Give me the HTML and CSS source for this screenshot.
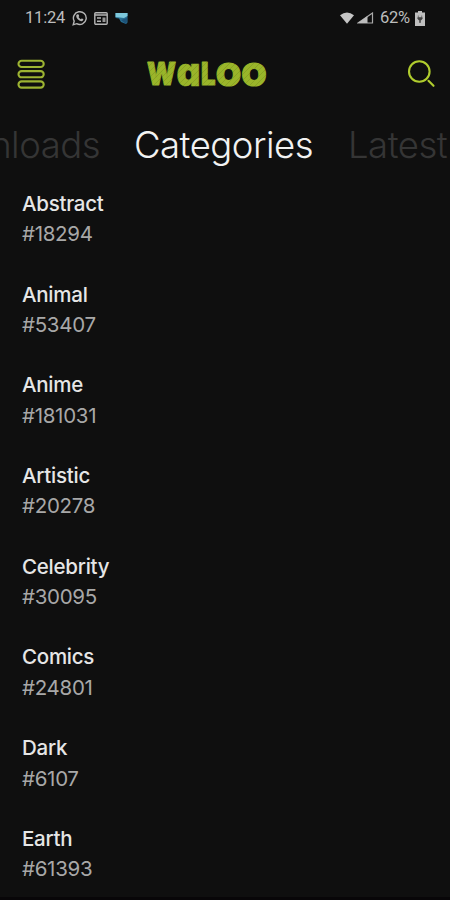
FILE: index.html
```html
<!DOCTYPE html>
<html lang="en">
<head>
<meta charset="utf-8">
<title>Waloo</title>
<link rel="stylesheet" href="styles.css">
</head>
<body>
<div class="screen">
  <div class="status">
    <span class="clock">11:24</span>
    <svg class="whatsapp" width="16" height="16" viewBox="0 0 16 16"><path d="M1.2 14.8l1-3.6a6.4 6.4 0 1 1 2.5 2.5z" fill="none" stroke="#b5b5b5" stroke-width="1.4"/><path d="M5.4 4.3l1.3.2.5 1.7-.7.8c.5 1 1.3 1.7 2.3 2.2l.8-.8 1.7.7c.1 1.5-.8 2.2-2 2.1-2.8-.5-5-2.8-5.1-5.2 0-.8.5-1.5 1.2-1.7z" fill="#b5b5b5"/></svg>
    <svg class="news" width="14" height="13" viewBox="0 0 14 13"><rect x=".8" y=".8" width="12.4" height="11.4" rx="1" fill="none" stroke="#b5b5b5" stroke-width="1.4"/><path d="M1 3h12M3 6h4M3 9.3h4" stroke="#b5b5b5" stroke-width="1.5"/><path d="M8.5 5.5h3v4.5h-3z" fill="#969696"/></svg>
    <svg class="app" width="13" height="13" viewBox="0 0 13 13"><path d="M.5 1h12v9.5L11 12 6 10 4 6.5.5 6z" fill="#286f93"/><path d="M.5 1h12v3L9 6 .5 5z" fill="#7dc8dc"/><path d="M6 8l6-2v3.5L11 12z" fill="#1d5278"/></svg>
    <svg class="wifi" width="14" height="12" viewBox="0 0 14 12"><path d="M0 3.3Q7-2.5 14 3.3L7 11.8z" fill="#c5c5c5"/></svg>
    <svg class="signal" width="17" height="12" viewBox="0 0 17 12"><path d="M1 11L15.5 1v10z" fill="none" stroke="#aaa" stroke-width="1.2"/><path d="M1 11l9.5-7v7z" fill="#bdbdbd"/></svg>
    <span class="percent">62%</span>
    <svg class="battery" width="10" height="15" viewBox="0 0 10 15"><path d="M3 0h4v1.5h3V15H0V1.5h3z" fill="#bfbfbf"/><path d="M3.3 4.5v2M6.7 4.5v2M2.8 6.5h4.4V8L5.5 9.5v2h-1v-2L2.8 8z" fill="#444" stroke="#444" stroke-width=".6"/></svg>
  </div>
  <header class="bar">
    <svg class="menu" width="28" height="30" viewBox="0 0 28 30" fill="none" stroke="#9db432" stroke-width="2.1"><rect x="1.5" y="1.8" width="25.2" height="6.2" rx="3.1"/><rect x="1.5" y="12.1" width="25.2" height="6.2" rx="3.1"/><rect x="1.5" y="22.4" width="25.2" height="6.2" rx="3.1"/></svg>
    <svg class="logo" width="132" height="34" viewBox="0 0 132 34">
      <defs>
        <pattern id="weave" width="6" height="6" patternUnits="userSpaceOnUse"><rect width="6" height="6" fill="#9ab52a"/><path d="M0 6L6 0" stroke="#8aa325" stroke-width="1"/></pattern>
      </defs>
      <g class="letters" fill="url(#weave)" stroke="url(#weave)">
        <text x="7" y="28" textLength="29" lengthAdjust="spacingAndGlyphs">W</text>
        <text class="small-a" x="36.5" y="28.5" textLength="24" lengthAdjust="spacingAndGlyphs">a</text>
        <text x="61" y="28" textLength="14.5" lengthAdjust="spacingAndGlyphs">L</text>
        <text class="round" x="76" y="28.5" textLength="25" lengthAdjust="spacingAndGlyphs">O</text>
        <text class="round" x="101.5" y="28.5" textLength="25" lengthAdjust="spacingAndGlyphs">O</text>
      </g>
    </svg>
    <svg class="search" width="28" height="28" viewBox="0 0 28 28" fill="none" stroke="#b0cc2e" stroke-width="2.1" stroke-linecap="round"><circle cx="12.3" cy="11.5" r="10.3"/><path d="M21.5 20.8l5 5"/></svg>
  </header>
  <nav class="tabs">
    <div class="tab before"><span>Downloads</span></div>
    <div class="tab active">Categories</div>
    <div class="tab after">Latest</div>
  </nav>
  <main class="list">
    <section class="item"><div class="name">Abstract</div><div class="count">#18294</div></section>
    <section class="item"><div class="name">Animal</div><div class="count">#53407</div></section>
    <section class="item"><div class="name">Anime</div><div class="count">#181031</div></section>
    <section class="item"><div class="name">Artistic</div><div class="count">#20278</div></section>
    <section class="item"><div class="name">Celebrity</div><div class="count">#30095</div></section>
    <section class="item"><div class="name">Comics</div><div class="count">#24801</div></section>
    <section class="item"><div class="name">Dark</div><div class="count">#6107</div></section>
    <section class="item"><div class="name">Earth</div><div class="count">#61393</div></section>
  </main>
</div>
</body>
</html>
```
FILE: styles.css
```css
* { box-sizing: border-box; }
body { margin: 0; background: #0f0f0f; }
.screen {
  width: 450px;
  height: 900px;
  overflow: hidden;
  background: #0f0f0f;
  border-bottom: 3px solid #080608;
  font-family: Inter, "Liberation Sans", sans-serif;
}
.status {
  display: flex;
  align-items: center;
  height: 36px;
  padding: 0 25px;
  color: #bdbdbd;
  font: 400 16.5px/38px Roboto, sans-serif;
}
.clock { width: 47px; letter-spacing: -0.2px; }
.news { margin-left: 6px; }
.app { margin-left: 7px; }
.wifi { margin-left: auto; }
.signal { margin-left: 3px; }
.percent { margin-left: 6px; width: 35px; letter-spacing: -0.3px; }
.bar {
  display: flex;
  align-items: center;
  height: 76px;
  padding: 0 15px 0 17px;
}
.logo { margin-left: 95px; }
.search { margin-left: auto; }
.letters {
  font: 900 31px Inter, sans-serif;
  font-feature-settings: "cv11";
  stroke-width: 1px;
  stroke-linejoin: round;
}
.small-a { font-size: 40px; stroke-width: 0.5px; }
.round { font-size: 32px; stroke-width: 1.2px; }
.tabs {
  display: grid;
  grid-template-columns: 100px 180px 100px;
  column-gap: 34px;
  height: 77px;
  font-size: 36.5px;
  line-height: 66px;
  font-weight: 300;
  letter-spacing: -0.5px;
  color: #353535;
  white-space: nowrap;
}
.before { display: flex; justify-content: flex-end; overflow: hidden; }
.active { color: #f2f2f2; }
.list { padding-left: 22px; }
.item { height: 90.7px; font-size: 20.5px; line-height: 30.4px; }
.name { color: #e6e6e6; font-weight: 500; letter-spacing: -0.25px; }
.count { color: #a8a8a8; letter-spacing: -0.3px; }
```
